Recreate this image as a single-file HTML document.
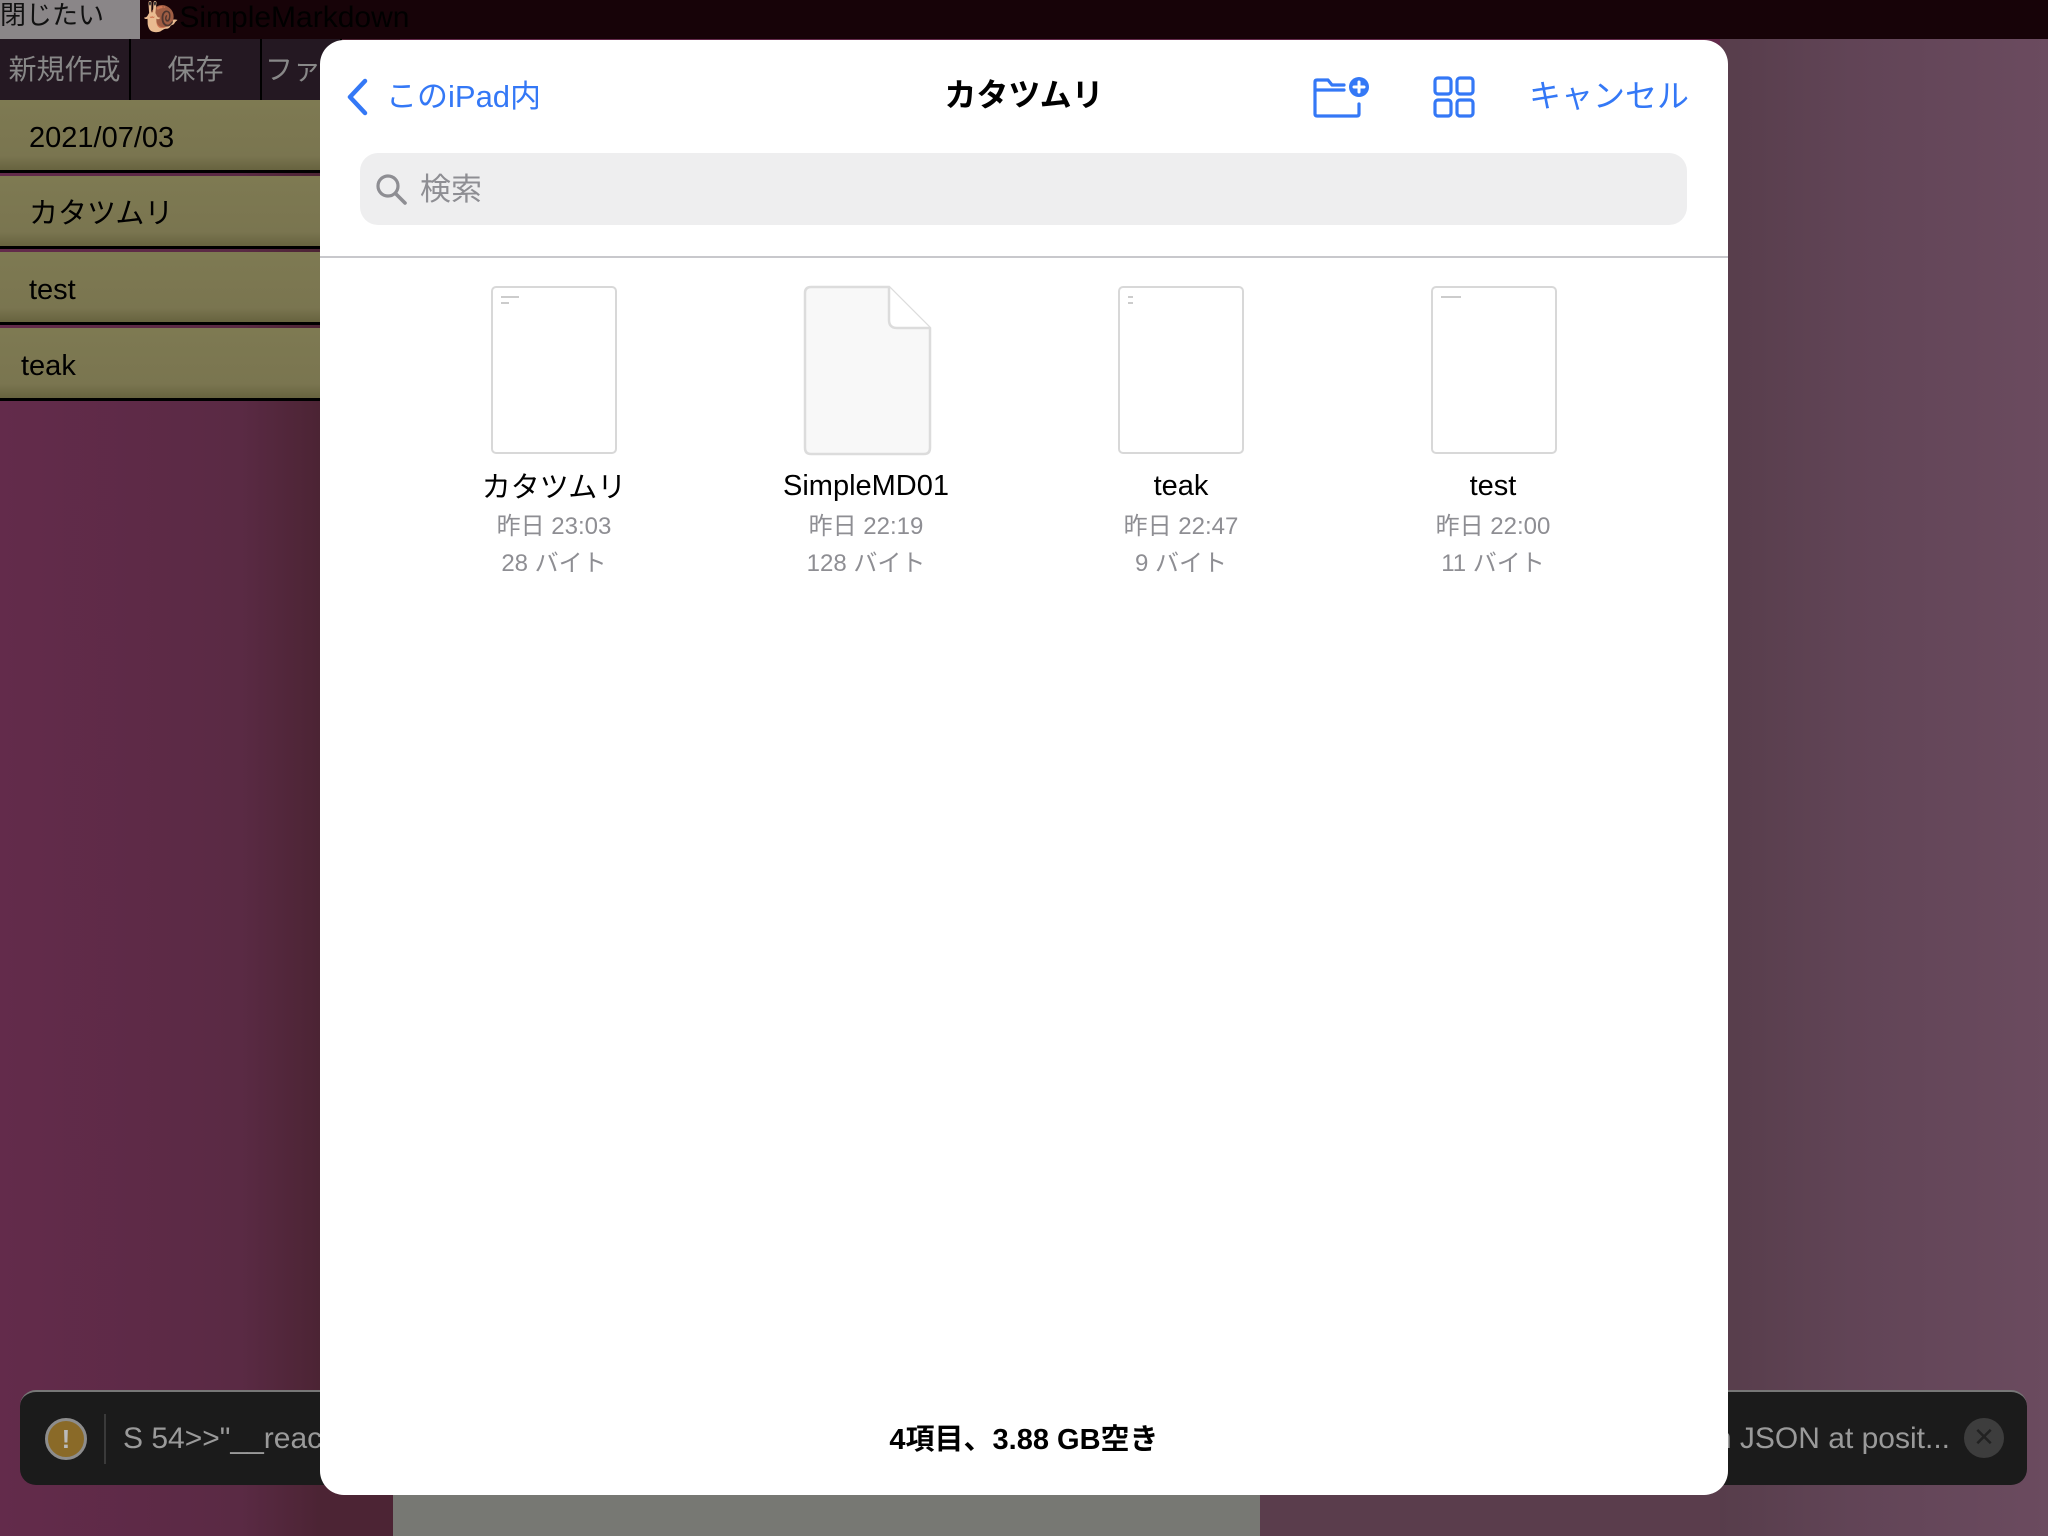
<!DOCTYPE html>
<html><head><meta charset="utf-8"><style>
*{margin:0;padding:0;box-sizing:border-box}
body{width:2048px;height:1536px;overflow:hidden;position:relative;font-family:"Liberation Sans","Noto Sans CJK JP",sans-serif;background:#62294a}
.abs{position:absolute}
.bgL{left:0;top:39px;width:400px;height:1497px;background:linear-gradient(90deg,#632b4b,#5a2a44 60%,#4c2434 80%,#4c2434)}
.bgR{left:1720px;top:39px;width:328px;height:1497px;background:linear-gradient(90deg,#573d4b,#614456 40%,#6b4b5f)}
.top{left:0;top:0;width:2048px;height:39px;background:#170308}
.close{left:0;top:0;width:140px;height:39px;background:#8a8688;color:#111;font-size:26px;line-height:30px}
.app{left:142px;top:0;font-size:30px;color:#000;line-height:36px}
.tb{top:39px;height:61px;background:#241822;border-right:2px solid #000;color:#888;font-size:28px;line-height:62px;text-align:center}
.row{left:0;width:330px;height:73px;background:linear-gradient(180deg,#7e7a52,#7a7550 80%,#67633f);border-bottom:3px solid #000;color:#000;font-size:29px;line-height:76px;padding-left:29px}
.modal{left:320px;top:40px;width:1408px;height:1455px;background:#fff;border-radius:24px;overflow:hidden}
.blue{color:#3478f6}
.thumb{position:absolute;width:126px;height:168px;border:2px solid #d8d8d8;border-radius:5px;background:#fff}
.name{position:absolute;width:300px;text-align:center;font-size:29px;color:#000}
.meta{position:absolute;width:300px;text-align:center;font-size:24px;color:#8e8e93}
.toast{top:1390px;height:95px;background:#1b1b1b;border-radius:16px;border-top:2px solid #777}
</style></head><body>
<div class="abs bgL"></div>
<div class="abs" style="left:1260px;top:1400px;width:470px;height:136px;background:#5a3d4c"></div>
<div class="abs bgR"></div>
<div class="abs" style="left:393px;top:1490px;width:867px;height:46px;background:#777873"></div>
<div class="abs top"></div>
<div class="abs close">閉じたい</div>
<div class="abs app">🐌SimpleMarkdown</div>
<div class="abs tb" style="left:0;width:131px">新規作成</div>
<div class="abs tb" style="left:131px;width:131px">保存</div>
<div class="abs tb" style="left:262px;width:80px;text-align:left;padding-left:3px">ファイ</div>
<div class="abs row" style="top:100px">2021/07/03</div>
<div class="abs row" style="top:176px">カタツムリ</div>
<div class="abs row" style="top:252px">test</div>
<div class="abs row" style="top:328px;padding-left:21px">teak</div>

<div class="abs toast" style="left:20px;width:400px">
 <div class="abs" style="left:25px;top:26px;width:42px;height:42px;border-radius:50%;background:#8a6a28;border:3px solid #8d8d8d;color:#bbb;font-size:26px;text-align:center;line-height:36px;font-weight:bold">!</div>
 <div class="abs" style="left:84px;top:22px;width:2px;height:50px;background:#3a3a3a"></div>
 <div class="abs" style="left:103px;top:30px;font-size:30px;color:#9a9a9a;white-space:nowrap">S 54&gt;&gt;"__react</div>
</div>
<div class="abs toast" style="left:1700px;width:327px">
 <div class="abs" style="left:0;top:30px;width:250px;text-align:right;font-size:30px;color:#9a9a9a;white-space:nowrap">in JSON at posit...</div>
 <div class="abs" style="left:264px;top:26px;width:40px;height:40px;border-radius:50%;background:#3d3d3d;color:#222;text-align:center;line-height:38px;font-size:26px">✕</div>
</div>

<div class="abs modal">
 <svg class="abs" style="left:25px;top:38px" width="26" height="38" viewBox="0 0 26 38"><path d="M20 3 L5 19 L20 35" fill="none" stroke="#3478f6" stroke-width="4.5" stroke-linecap="round" stroke-linejoin="round"/></svg>
 <div class="abs blue" style="left:66px;top:37px;font-size:31px;line-height:40px">このiPad内</div>
 <div class="abs" style="left:0;width:1408px;text-align:center;top:35px;font-size:32px;font-weight:bold;line-height:40px">カタツムリ</div>
 <svg class="abs" style="left:992px;top:34px" width="60" height="50" viewBox="0 0 60 50">
  <path d="M3 8 Q3 6 5 6 H16 L20 11 H32 M3 8 V40 Q3 42 5 42 H45 Q47 42 47 40 V30 M3 16 H32" fill="none" stroke="#3478f6" stroke-width="3.2" stroke-linejoin="round" stroke-linecap="round"/>
  <circle cx="47" cy="13" r="10" fill="#3478f6"/>
  <path d="M47 8 V18 M42 13 H52" stroke="#fff" stroke-width="3" stroke-linecap="round"/>
 </svg>
 <svg class="abs" style="left:1113px;top:36px" width="44" height="44" viewBox="0 0 44 44" fill="none" stroke="#3478f6" stroke-width="3.2">
  <rect x="2" y="2" width="16" height="16" rx="3"/><rect x="24" y="2" width="16" height="16" rx="3"/>
  <rect x="2" y="24" width="16" height="16" rx="3"/><rect x="24" y="24" width="16" height="16" rx="3"/>
 </svg>
 <div class="abs blue" style="left:1209px;top:36px;font-size:32px;line-height:40px">キャンセル</div>
 <div class="abs" style="left:40px;top:113px;width:1327px;height:72px;background:#eeeeef;border-radius:18px">
  <svg class="abs" style="left:15px;top:20px" width="34" height="34" viewBox="0 0 34 34"><circle cx="13" cy="13" r="10" fill="none" stroke="#8e8e93" stroke-width="3.2"/><path d="M20.5 20.5 L30 30" stroke="#8e8e93" stroke-width="3.6" stroke-linecap="round"/></svg>
  <div class="abs" style="left:60px;top:17px;font-size:31px;color:#8e8e93;line-height:40px">検索</div>
 </div>
 <div class="abs" style="left:0;top:216px;width:1408px;height:2px;background:#c8c8cc"></div>

 <div class="thumb" style="left:171px;top:246px"><div style="margin:8px 0 0 8px;width:18px;height:2px;background:#ccc"></div><div style="margin:4px 0 0 8px;width:8px;height:2px;background:#ccc"></div></div>
 <svg class="abs" style="left:483px;top:245px" width="130" height="171" viewBox="0 0 130 171"><path d="M8 2 H86 L127 43 V163 Q127 169 121 169 H8 Q2 169 2 163 V8 Q2 2 8 2 Z" fill="#f8f8f8" stroke="#dcdcdc" stroke-width="2.5"/><path d="M86 2 V35 Q86 43 94 43 H127" fill="#fff" stroke="#dcdcdc" stroke-width="2.5"/></svg>
 <div class="thumb" style="left:798px;top:246px"><div style="margin:8px 0 0 8px;width:5px;height:2px;background:#ccc"></div><div style="margin:4px 0 0 8px;width:5px;height:2px;background:#ccc"></div></div>
 <div class="thumb" style="left:1111px;top:246px"><div style="margin:8px 0 0 8px;width:20px;height:2px;background:#ccc"></div></div>

 <div class="name" style="left:84px;top:424px">カタツムリ</div>
 <div class="meta" style="left:84px;top:466px">昨日 23:03</div>
 <div class="meta" style="left:84px;top:503px">28 バイト</div>
 <div class="name" style="left:396px;top:430px">SimpleMD01</div>
 <div class="meta" style="left:396px;top:466px">昨日 22:19</div>
 <div class="meta" style="left:396px;top:503px">128 バイト</div>
 <div class="name" style="left:711px;top:430px">teak</div>
 <div class="meta" style="left:711px;top:466px">昨日 22:47</div>
 <div class="meta" style="left:711px;top:503px">9 バイト</div>
 <div class="name" style="left:1023px;top:430px">test</div>
 <div class="meta" style="left:1023px;top:466px">昨日 22:00</div>
 <div class="meta" style="left:1023px;top:503px">11 バイト</div>

 <div class="abs" style="left:0;width:1408px;text-align:center;top:1380px;font-size:29px;font-weight:bold;line-height:40px">4項目、3.88 GB空き</div>
</div>
</body></html>
